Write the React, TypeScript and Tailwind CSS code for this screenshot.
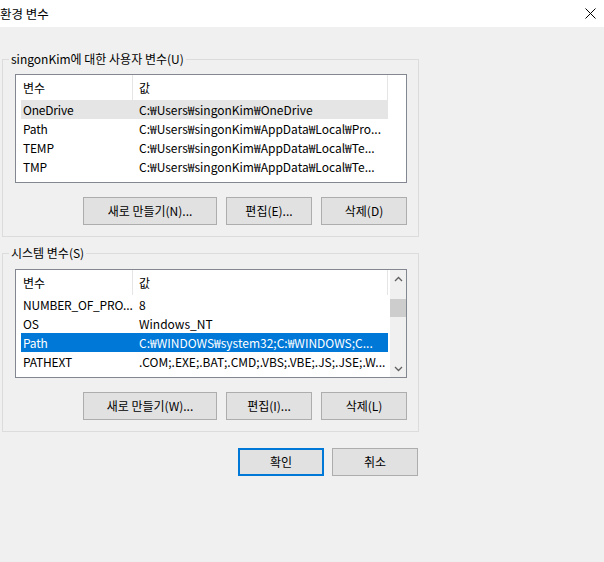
import React from "react";

type Row = { name: string; value: string };

const FONT = { fontFamily: '"Noto Sans CJK KR", "Noto Sans", sans-serif' };

function Chevron({ up }: { up: boolean }) {
  return (
    <svg width="9" height="6" viewBox="0 0 9 6">
      <polyline
        points={up ? "1,5 4.5,1.5 8,5" : "1,1 4.5,4.5 8,1"}
        fill="none"
        stroke="#606060"
        strokeWidth="1.3"
      />
    </svg>
  );
}

function ListBox({
  rows,
  selected,
  selectedKind,
  scroll,
}: {
  rows: Row[];
  selected: number;
  selectedKind: "gray" | "blue";
  scroll: boolean;
}) {
  return (
    <div className="flex w-[392px] h-[109px] border border-[#828790] bg-white">
      <div className="flex flex-col w-[373px] pl-[5px] pr-[1px]">
        <div className="flex h-[25px] items-center text-black">
          <div className="w-[112px] h-full border-r border-[#e5e5e5] pl-[2px] flex items-center">변수</div>
          <div className="flex-1 h-full border-r border-[#e5e5e5] pl-[6px] flex items-center">값</div>
        </div>
        {rows.map((r, i) => {
          const sel = i === selected;
          const bg = sel ? (selectedKind === "blue" ? "bg-[#0078d7] text-white" : "bg-[#e5e5e5] text-black") : "text-black";
          return (
            <div key={i} className={`flex h-[19px] items-center whitespace-nowrap ${bg}`}>
              <div className="w-[112px] shrink-0 pl-[2px] tracking-[-0.2px]">{r.name}</div>
              <div className="flex-1 pl-[6px] overflow-hidden">{r.value}</div>
            </div>
          );
        })}
      </div>
      {scroll ? (
        <div className="flex flex-col w-[16px] bg-[#f0f0f0] ml-px">
          <div className="h-[17px] flex items-center justify-center pt-[1px]">
            <Chevron up={true} />
          </div>
          <div className="flex-1 pt-[12px]">
            <div className="h-[18px] bg-[#cdcdcd]" />
          </div>
          <div className="h-[17px] flex items-center justify-center">
            <Chevron up={false} />
          </div>
        </div>
      ) : null}
    </div>
  );
}

function Btn({ w, children, primary }: { w: string; children: React.ReactNode; primary?: boolean }) {
  return (
    <div
      className={`${w} h-[28px] flex items-center justify-center bg-[#e1e1e1] text-black ${
        primary ? "border-2 border-[#0078d7]" : "border border-[#adadad]"
      }`}
    >
      {children}
    </div>
  );
}

export default function App() {
  const userRows: Row[] = [
    { name: "OneDrive", value: "C:₩Users₩singonKim₩OneDrive" },
    { name: "Path", value: "C:₩Users₩singonKim₩AppData₩Local₩Pro..." },
    { name: "TEMP", value: "C:₩Users₩singonKim₩AppData₩Local₩Te..." },
    { name: "TMP", value: "C:₩Users₩singonKim₩AppData₩Local₩Te..." },
  ];
  const sysRows: Row[] = [
    { name: "NUMBER_OF_PRO...", value: "8" },
    { name: "OS", value: "Windows_NT" },
    { name: "Path", value: "C:₩WINDOWS₩system32;C:₩WINDOWS;C..." },
    { name: "PATHEXT", value: ".COM;.EXE;.BAT;.CMD;.VBS;.VBE;.JS;.JSE;.W..." },
  ];

  return (
    <div className="w-[604px] h-[562px] flex flex-col bg-[#f0f0f0] text-[12px] leading-[16px] overflow-hidden" style={FONT}>
      <div className="h-[27px] bg-white flex items-center justify-between shrink-0">
        <div className="text-black text-[12.5px]">환경 변수</div>
        <svg width="11" height="11" viewBox="0 0 11 11" className="mr-[8px]">
          <path d="M0.5 0.5 L10.5 10.5 M10.5 0.5 L0.5 10.5" stroke="#000" strokeWidth="1" />
        </svg>
      </div>

      <fieldset className="ml-[2px] mt-[24px] w-[417px] border border-[#dcdcdc] pl-[12px] pb-[11px]">
        <legend className="-ml-[6px] px-[2px] leading-[16px] text-black">singonKim에 대한 사용자 변수(U)</legend>
        <div className="mt-[7px]">
          <ListBox rows={userRows} selected={0} selectedKind="gray" scroll={false} />
        </div>
        <div className="mt-[14px] w-[392px] flex justify-end gap-[9px]">
          <Btn w="w-[134px]">새로 만들기(N)...</Btn>
          <Btn w="w-[86px]">편집(E)...</Btn>
          <Btn w="w-[86px]">삭제(D)</Btn>
        </div>
      </fieldset>

      <fieldset className="ml-[2px] mt-[8px] w-[417px] border border-[#dcdcdc] pl-[12px] pb-[11px]">
        <legend className="-ml-[6px] px-[2px] leading-[16px] text-black">시스템 변수(S)</legend>
        <div className="mt-[8px]">
          <ListBox rows={sysRows} selected={2} selectedKind="blue" scroll={true} />
        </div>
        <div className="mt-[14px] w-[392px] flex justify-end gap-[9px]">
          <Btn w="w-[134px]">새로 만들기(W)...</Btn>
          <Btn w="w-[86px]">편집(I)...</Btn>
          <Btn w="w-[86px]">삭제(L)</Btn>
        </div>
      </fieldset>

      <div className="mt-[16px] w-[418px] flex justify-end gap-[8px]">
        <Btn w="w-[86px]" primary>확인</Btn>
        <Btn w="w-[86px]">취소</Btn>
      </div>
    </div>
  );
}
